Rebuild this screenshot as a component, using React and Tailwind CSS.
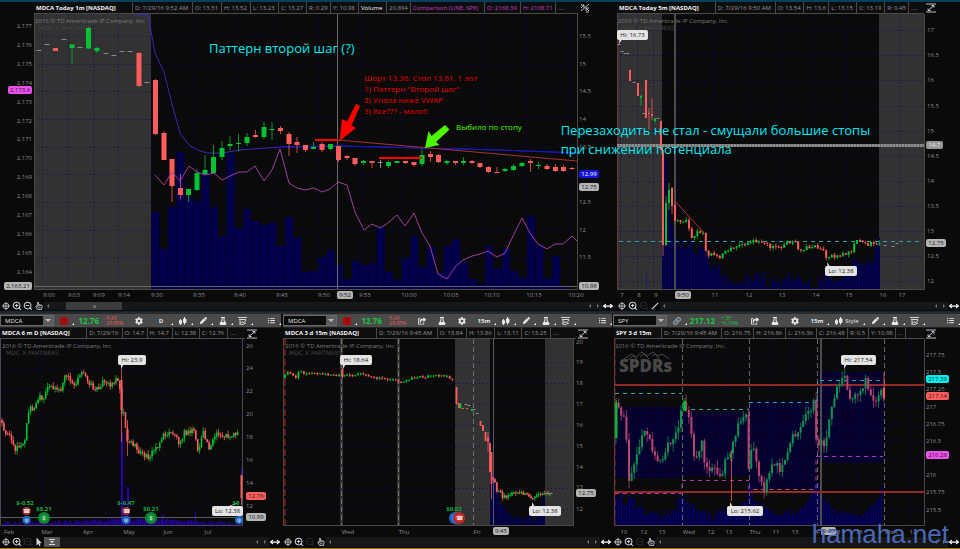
import { FaCog, FaFlask, FaPen, FaListUl, FaShareSquare, FaRegHandPointer, FaMousePointer, FaLink } from "react-icons/fa";
import { ZoomIn, ZoomOut, MoveHorizontal } from "lucide-react";

const GREEN = "#00c232";
const RED = "#ff5c5c";

// repeatable noise in the range -1..1
function noise(i) {
  const n = Math.sin(i * 12.9898 + 4.1) * 43758.5453;
  return (n - Math.floor(n)) * 2 - 1;
}

function levelAt(points, x) {
  for (let i = 1; i < points.length; i++) {
    const [x0, y0] = points[i - 1];
    const [x1, y1] = points[i];
    if (x <= x1) return y0 + ((y1 - y0) * (x - x0)) / (x1 - x0);
  }
  return points[points.length - 1][1];
}

// candles along a list of turning points: [x, top, bottom, high, low, up]
function walk(points, step, swing, wick = 1.4) {
  const out = [];
  let open = points[0][1];
  const end = points[points.length - 1][0];
  for (let x = points[0][0], i = 0; x <= end; x += step, i++) {
    const close = levelAt(points, x + step / 2) + noise(i) * swing;
    const top = Math.min(open, close);
    const bottom = Math.max(open, close, top + 1);
    out.push([
      x,
      top,
      bottom,
      top - Math.abs(noise(i + 500)) * swing * wick,
      bottom + Math.abs(noise(i + 900)) * swing * wick,
      close < open ? 1 : 0,
    ]);
    open = close;
  }
  return out;
}

const pts = (list) => list.map((p) => p.join(",")).join(" ");

function Candles({ data, width, up = GREEN, down = RED }) {
  return data.map(([x, top, bottom, high = top, low = bottom, isUp], i) => (
    <g key={i} fill={isUp ? up : down}>
      <rect x={x - 0.5} y={high} width="1" height={low - high} opacity="0.75" />
      <rect x={x - width / 2} y={top} width={width} height={bottom - top} />
    </g>
  ));
}

function Dashes({ data, width = 5 }) {
  return data.map(([x, y], i) => (
    <rect key={i} x={x - width / 2} y={y} width={width} height="1" fill="#8a8a8a" />
  ));
}

function Volume({ points, step, base, jitter = 0, fill = "#020050" }) {
  const bars = [];
  const end = points[points.length - 1][0];
  for (let x = points[0][0], i = 0; x <= end; x += step, i++) {
    const y = Math.min(base - 1, levelAt(points, x) + noise(i + 40) * jitter);
    bars.push(<rect key={i} x={x} y={y} width={step - 0.4} height={base - y} fill={fill} />);
  }
  return bars;
}

function Grid({ xs, ys, box }) {
  const [x0, y0, x1, y1] = box;
  return (
    <g stroke="#0c0c50" strokeDasharray="1 3">
      {xs.map((x) => (
        <line key={x} x1={x + 0.5} x2={x + 0.5} y1={y0} y2={y1} />
      ))}
      {ys.map((y) => (
        <line key={y} x1={x0} x2={x1} y1={y + 0.5} y2={y + 0.5} />
      ))}
    </g>
  );
}

function Frame({ box }) {
  const [x0, y0, x1, y1] = box;
  return (
    <path
      d={`M${x0 + 0.5} ${y0}V${y1 + 0.5}H${x1 + 0.5}V${y0}`}
      fill="none"
      stroke="#4a4a4a"
    />
  );
}

function PriceLabels({ x, labels, anchor = "start" }) {
  return labels.map(([text, y]) => (
    <text key={text} x={x} y={y + 2} fill="#8c8c8c" textAnchor={anchor}>
      {text}
    </text>
  ));
}

function TimeLabels({ y, labels }) {
  return labels.map(([text, x], i) => (
    <text key={i} x={x} y={y + 2} fill="#8c8c8c" textAnchor="middle">
      {text}
    </text>
  ));
}

function Tag({ x, y, w, text, fill = "#b4b4b4", color = "#1c1c1c" }) {
  return (
    <g>
      <rect x={x} y={y - 4} width={w} height="8" rx="2" fill={fill} />
      <text x={x + w / 2} y={y + 2} fill={color} textAnchor="middle">
        {text}
      </text>
    </g>
  );
}

function Callout({ x, y, w, text, tip }) {
  return (
    <g>
      <polygon points={`${tip[0]},${tip[1]} ${x + 3},${y + 5} ${x + 8},${y + 5}`} fill="#e4e4e4" />
      <rect x={x} y={y} width={w} height="10" rx="2" fill="#e4e4e4" />
      <text x={x + w / 2} y={y + 7} fill="#222" textAnchor="middle">
        {text}
      </text>
    </g>
  );
}

function Copyright({ x, y, partner = true }) {
  return (
    <g>
      <text x={x} y={y} fill="#7c7c7c">
        2016 © TD Ameritrade IP Company, Inc.
      </text>
      {partner && (
        <text x={x + 4} y={y + 7} fill="#444" fontFamily="DejaVu Sans, sans-serif">
          MDC X PARTNERS
        </text>
      )}
    </g>
  );
}

function Marker({ x, y, r = 4, fill, sign }) {
  return (
    <g>
      <circle cx={x} cy={y} r={r} fill={fill} />
      <circle cx={x} cy={y} r={r - 1.2} fill="none" stroke="#0a0a0a" strokeWidth="0.5" opacity="0.6" />
      <text x={x} y={y + 2} fill="#e8e8e8" textAnchor="middle">
        {sign}
      </text>
    </g>
  );
}

function Chart({ viewBox, label, children }) {
  return (
    <svg viewBox={viewBox} role="img" aria-label={label} className="block w-full h-auto text-[6px] font-medium">
      {children}
    </svg>
  );
}

/* ---------- header, toolbar, footer ---------- */

function AxisIcon({ split }) {
  return (
    <svg viewBox="0 0 10 10" className="size-2.5 text-gray-300" fill="none" stroke="currentColor">
      {split ? (
        <path d="M1 2h3v3M1 5l3-3M1 8l8-7M9 5H6v3M6 5l3 3M6 9h3" strokeWidth="0.9" />
      ) : (
        <path d="M0 1h10M0 9h10M2 7.5l6-5M5.5 2.5H8v2M2 5.5v2h2.5" strokeWidth="0.9" />
      )}
    </svg>
  );
}

function Header({ title, titleWidth, cells, split, className }) {
  return (
    <div className={"flex items-stretch pr-6 " + className}>
      <div className="flex flex-1 min-w-0 border-b border-[#4a4a4a] bg-[#0e0e0e] font-medium text-[#949494]">
        <h2
          className="flex min-w-0 items-center font-bold text-gray-100 whitespace-nowrap"
          style={{ flexGrow: titleWidth, flexBasis: 0 }}
        >
          <span className="pl-0.5">{title}</span>
        </h2>
        {cells.map(([text, width, color], i) => (
          <div key={i} className="flex min-w-0" style={{ flexGrow: width, flexBasis: 0 }}>
            <span
              className={
                "flex flex-1 items-center border-l border-[#4a4a4a] pl-0.5 whitespace-nowrap " +
                (color || "")
              }
            >
              {text}
            </span>
          </div>
        ))}
      </div>
      <div className="flex w-3 items-center justify-end">
        <AxisIcon split={split} />
      </div>
    </div>
  );
}

function ToolButton({ label, className = "w-5", corner = true, children }) {
  return (
    <button
      type="button"
      aria-label={label}
      className={"relative flex h-full shrink-0 items-center justify-center text-gray-200 " + className}
    >
      {children}
      {corner && (
        <svg viewBox="0 0 2 2" className="absolute right-0 bottom-0.5 size-0.5">
          <path d="M2 0v2H0z" fill="#fff" />
        </svg>
      )}
    </button>
  );
}

function CandleIcon() {
  return (
    <svg viewBox="0 0 8 8" className="size-2" fill="none" stroke="currentColor">
      <path d="M0.5 3.5h2v3h-2zM1.5 2v6" />
      <path d="M4.5 2h2.5v3.5H4.5zM5.5 0v7.5" fill="currentColor" />
    </svg>
  );
}

function PatternIcon() {
  return (
    <svg viewBox="0 0 10 10" className="size-2.5" fill="none" stroke="currentColor">
      <path d="M0 1.5h9M1 3.5h7M2 4v5M2 8l2-2.5 1.5 1.5L8 4M3 9l5-2" strokeWidth="0.9" />
    </svg>
  );
}

function Toolbar({ symbol, price, change, percent, tone, linked, study, interval, style, className = "" }) {
  return (
    <div className={"flex h-3.5 items-stretch border-b border-[#222] bg-[#4a4a4a] " + className}>
      <div className="relative my-px w-[54px] shrink-0">
        <select
          aria-label="Symbol"
          defaultValue={symbol}
          className="block h-full w-full appearance-none border border-[#6a6a6a] bg-[#0c0c0c] pl-1 text-[6px] leading-none text-gray-200"
        >
          <option>{symbol}</option>
        </select>
        <span className="pointer-events-none absolute inset-y-px right-px flex w-2.5 items-center justify-center bg-[#5c5c5c]">
          <svg viewBox="0 0 6 3" className="w-1.5">
            <path d="M0 0h6L3 3z" fill="#bbb" />
          </svg>
        </span>
      </div>
      <ToolButton label="Link">
        {linked ? (
          <span className="flex size-2 items-center justify-center rounded-[1px] bg-[#a80c0c] text-[5px] text-[#400]">
            1
          </span>
        ) : (
          <FaLink className="size-2 text-gray-400" />
        )}
      </ToolButton>
      <div
        className={
          "flex items-center justify-end pr-1 text-[8px] font-bold text-[#14c83c] " +
          (linked ? "w-[29px]" : "w-8")
        }
      >
        {price}
      </div>
      <div className={"flex w-[26px] flex-col justify-center pl-0.5 text-[5px] leading-[5px] font-medium " + tone}>
        <span>{change}</span>
        <span>{percent}</span>
      </div>
      {study && (
        <>
          <ToolButton label="Share" corner={false}>
            <FaShareSquare className="size-2" />
          </ToolButton>
          <ToolButton label="Studies" corner={false}>
            <FaFlask className="size-2" />
          </ToolButton>
        </>
      )}
      <ToolButton label="Settings" corner={false}>
        <FaCog className="size-2" />
      </ToolButton>
      <ToolButton label="Time frame" className="w-6">
        <span className="text-[6px] font-bold">{interval}</span>
      </ToolButton>
      <ToolButton label="Chart style" className={style ? "w-9 gap-0.5" : "w-5"}>
        <CandleIcon />
        {style && <span className="text-[6px]">{style}</span>}
      </ToolButton>
      <ToolButton label="Drawings">
        <FaPen className="size-[7px]" />
      </ToolButton>
      <ToolButton label="Edit studies">
        <FaFlask className="size-2" />
      </ToolButton>
      <ToolButton label="Patterns">
        <PatternIcon />
      </ToolButton>
      <ToolButton label="Menu" className="ml-auto w-5">
        <FaListUl className="size-[7px]" />
      </ToolButton>
    </div>
  );
}

function CrossIcon() {
  return (
    <svg viewBox="0 0 10 10" className="size-2" fill="none" stroke="currentColor">
      <circle cx="5" cy="5" r="3.5" />
      <path d="M5 0v10M0 5h10" />
    </svg>
  );
}

function Footer({ pointer, zoomedOut, thumb, className = "" }) {
  const btn = "flex w-[11px] shrink-0 items-center justify-center text-gray-300";
  return (
    <div className={"flex items-stretch " + className}>
      <button type="button" aria-label="Crosshair" className={btn}>
        <CrossIcon />
      </button>
      <button type="button" aria-label="Zoom in" className={btn}>
        <ZoomIn className="size-2.5" strokeWidth={2.5} />
      </button>
      <button type="button" aria-label="Zoom out" className={btn + (zoomedOut ? "" : " opacity-15")}>
        <ZoomOut className="size-2.5" strokeWidth={2.5} />
      </button>
      <button type="button" aria-label="Pointer" className={btn}>
        {pointer === "hand" && <FaRegHandPointer className="size-2" />}
        {pointer === "arrow" && <FaMousePointer className="size-2" />}
        {pointer === "line" && (
          <svg viewBox="0 0 10 10" className="size-2" stroke="currentColor">
            <path d="M1 9L9 1" strokeWidth="1.5" />
          </svg>
        )}
      </button>
      <div className="my-px flex min-w-0 flex-1 items-center gap-1 bg-[#171717] text-[#777]">
        {thumb === "tab" ? (
          <span className="flex h-full w-4 items-center justify-center bg-[#555]">
            <svg viewBox="0 0 6 6" className="size-1.5">
              <path d="M0 0.5h6M0 5.5h6" stroke="#ddd" />
              <path d="M1 2h4L3 4.5z" fill="#ddd" />
            </svg>
          </span>
        ) : (
          <svg viewBox="0 0 4 4" className="ml-0.5 size-1">
            <path d="M3 0v4L1 2z" fill="currentColor" />
          </svg>
        )}
        {thumb === "bar" && (
          <span className="ml-3 flex h-full w-14 items-center justify-center bg-[#3c3c3c]">
            <span className="size-[3px] bg-[#666]" />
          </span>
        )}
        <svg viewBox="0 0 4 4" className="ml-auto size-1">
          <path d="M3 0v4L1 2z" fill="currentColor" />
        </svg>
        <svg viewBox="0 0 4 4" className="mr-0.5 size-1">
          <path d="M1 0v4l2-2z" fill="currentColor" />
        </svg>
      </div>
      <button type="button" aria-label="Fit width" className="flex w-3 shrink-0 items-center justify-center text-white">
        <MoveHorizontal className="size-2.5" strokeWidth={3} />
      </button>
    </div>
  );
}

/* ---------- MDCA today, 1 minute ---------- */

const minuteCandles = [
  [55.5, 48, 51], [72, 44.5, 48, 44, 64, 1], [88.5, 28, 48.5, 27, 49, 1], [97, 48, 51, 47, 53, 1],
  [139, 53, 86, 52, 87], [155.5, 80, 134, 79, 135], [164, 133, 160, 131, 160], [172, 159, 186, 159, 202],
  [180.5, 188, 195, 174, 199], [188.5, 189, 195, 189, 202, 1], [197, 173, 190, 169, 191, 1],
  [205, 170, 174, 155, 175, 1], [213.5, 157, 173, 145, 174, 1], [222, 148, 157, 141, 160, 1],
  [230, 144, 146, 136, 150, 1], [238.5, 143, 144, 134, 151, 1], [247, 137, 143, 133, 146, 1],
  [255.5, 135, 137, 130, 138], [264, 127, 137, 122, 139, 1], [272, 129, 130, 122, 140, 1],
  [280.5, 128, 131, 126, 134], [289, 134, 144, 132, 156], [297, 142, 145, 137, 153],
  [305.5, 145, 150, 145, 152], [313.5, 147, 149, 142, 149, 1], [322, 144, 150, 142, 152],
  [330.5, 144, 149, 144, 150, 1], [338.5, 146, 160, 146, 162], [347, 156, 158, 155, 160],
  [355, 158, 164, 158, 166], [363.5, 161, 163, 160, 165, 1], [372, 161, 163, 161, 168],
  [388.5, 162, 166, 161, 168, 1], [397, 161, 163, 161, 163, 1], [405.5, 161, 163, 161, 164],
  [414, 162, 165, 162, 167], [422, 155, 164, 149, 166, 1], [430.5, 154, 157, 151, 162],
  [438.5, 155, 162, 154, 163], [447, 161, 163, 160, 165, 1], [455.5, 161, 163, 161, 165],
  [463.5, 161, 163, 157, 165, 1], [472, 161, 163, 160, 164], [480, 163, 167, 163, 168],
  [488.5, 167, 172, 166, 173], [497, 172, 173, 167, 173], [505, 169, 171, 168, 172, 1],
  [513.5, 166, 170, 164, 171, 1], [522, 163, 166, 162, 167, 1], [530.5, 161, 163, 159, 172],
  [538.5, 165, 166, 162, 169, 1], [547, 166, 169, 164, 170], [555.5, 167, 171, 164, 172],
  [563.5, 167, 171, 165, 172], [572, 168, 169, 167, 170],
];

const minuteVolume = [
  212, 249, 207, 152, 197, 201, 170, 207, 236, 153, 228, 209, 221, 225, 223, 246, 217, 237, 272, 271,
  257, 250, 265, 279, 261, 265, 263, 227, 272, 280, 258, 236, 267, 247, 273, 246, 239, 262, 279, 284,
  246, 269, 248, 271, 278, 216, 245, 278, 256, 287,
];

const spxLine = [
  [155, 175], [164, 185], [172, 172], [180, 181], [189, 166], [197, 172], [205, 175], [214, 173],
  [222, 180], [230, 176], [239, 172], [247, 172], [255, 166], [264, 181], [272, 170], [280, 149],
  [289, 183], [297, 188], [305, 190], [314, 188], [322, 192], [330, 189], [338, 182], [347, 185],
  [355, 212], [364, 230], [372, 224], [380, 228], [388, 223], [397, 215], [405, 226], [414, 213],
  [422, 233], [430, 246], [438, 274], [447, 279], [455, 267], [463, 260], [472, 256], [480, 254],
  [488, 251], [497, 257], [505, 253], [513, 236], [522, 218], [530, 233], [538, 244], [547, 249],
  [555, 244], [563, 244], [572, 236], [577, 241],
];

const vwapLine = [
  [133, 14], [148, 15], [155, 53], [164, 72], [172, 104], [180, 133], [189, 145], [197, 150],
  [207, 153], [222, 153], [240, 150], [280, 147], [340, 146], [420, 148], [500, 150], [577, 153],
];

const spxLabels = Array.from({ length: 14 }, (_, i) => ["2," + (177 - i), Math.round(26 + i * 18.9)]);

function MinuteChart() {
  const box = [34, 14, 577, 289];
  return (
    <Chart viewBox="0 14 614 287" label="MDCA 1 minute">
      <rect x="34" y="14" width="117" height="275" fill="#323232" />
      <Grid
        xs={[42, 68, 93, 118, 151, 193, 235, 276, 318, 360, 401, 443, 485, 526, 568]}
        ys={[36, 64, 91, 119, 147, 174, 202, 230, 257]}
        box={box}
      />
      <Copyright x={35} y={23} />
      {minuteVolume.map((y, i) => (
        <rect key={i} x={151.4 + i * 8.35} y={y} width="8" height={289 - y} fill="#02004a" />
      ))}
      <Frame box={box} />
      <rect x="34" y="286" width="543" height="1" fill="#666" />
      <rect x="337" y="14" width="1" height="275" fill="#6c6c6c" />
      <Dashes data={[[39, 50], [47, 44], [64, 39], [80, 47], [106, 53], [114, 55], [122, 51], [130, 51], [147, 82], [380, 162]]} />
      <rect x="380" y="160" width="1" height="8" fill="#8a8a8a" />
      <polyline points={pts(vwapLine)} fill="none" stroke="#3a28b4" />
      <polyline points="280,147 340,146 420,148 500,150 577,153" fill="none" stroke="#1414c0" />
      <Candles data={minuteCandles} width={5} />
      <polyline points={pts(spxLine)} fill="none" stroke="#a03ca0" />
      <line x1="338" y1="140" x2="577" y2="161" stroke="#a83232" />
      <rect x="315" y="139" width="23" height="2" fill="#f00" />
      <rect x="379" y="157" width="43" height="2" fill="#f00" />
      <polygon points="356,104 360,106 351.5,125.5 356,128 339.5,141 342,119 347,121.5" fill="#f00" />
      <polygon points="445,125 449.5,129.5 436,142 439.5,145 425,148 428.5,131 431.5,136" fill="#4cf800" />
      <PriceLabels x={32} labels={spxLabels} anchor="end" />
      <Tag x={8} y={90} w={24} text="2,173.6" fill="#f050f0" />
      <Tag x={4} y={286} w={28} text="2,163.21" />
      <PriceLabels
        x={579}
        labels={[["15.5", 36], ["15", 64], ["14.5", 91], ["14", 119], ["13.5", 147], ["12.5", 202], ["12", 230], ["11.5", 257]]}
      />
      <Tag x={579} y={174} w={20} text="12.99" fill="#1414dc" color="#fff" />
      <Tag x={579} y={187} w={20} text="12.75" />
      <Tag x={579} y={286} w={20} text="10.98" />
      <TimeLabels
        y={295}
        labels={[
          ["9:00", 49], ["9:03", 74], ["9:09", 99], ["9:14", 124], ["9:30", 157], ["9:35", 199],
          ["9:40", 240], ["9:45", 282], ["9:50", 324], ["9:55", 365], ["10:00", 409], ["10:05", 451],
          ["10:10", 492], ["10:15", 534], ["10:20", 576],
        ]}
      />
      <Tag x={337} y={295} w={16} text="9:52" />
      <g fontWeight="400">
        <text x="209" y="53" fill="#00e8f0" className="text-[13px]">
          Паттерн второй шаг (?)
        </text>
        <g fill="#e60000" className="text-[8px]">
          <text x="364" y="81">Шорт 13.36. Стоп 13.61. 1 лот</text>
          <text x="364" y="92">1) Паттерн "Второй шаг"</text>
          <text x="364" y="103">2) Упала ниже VWAP</text>
          <text x="364" y="114">3) Все??? - мало!!</text>
        </g>
        <text x="456" y="130" fill="#4cf800" className="text-[8px]">
          Выбило по стопу
        </text>
      </g>
    </Chart>
  );
}

/* ---------- MDCA today, 5 minutes ---------- */

const fiveMinute = walk(
  [
    [675, 205], [676, 221], [684, 221], [688, 219], [693, 240], [698, 230], [705, 234], [708, 258],
    [712, 253], [720, 258], [728, 251], [737, 248], [747, 243], [755, 241], [763, 242], [772, 247],
    [782, 247], [788, 241], [797, 243], [799, 250], [810, 247], [823, 247], [828, 260], [833, 256],
    [843, 255], [853, 250], [856, 243], [859, 238], [868, 245], [877, 243], [881, 244],
  ],
  2.8,
  2
);

const fiveMinuteOpen = [
  [630, 70, 81], [638, 83, 96], [641, 96, 98, 95, 106, 1], [646, 80, 118], [649, 113, 114, 108, 130],
  [652, 114, 116, 98, 120], [655, 118, 121, 118, 123, 1], [661, 121, 150], [663, 150, 245, 150, 256],
  [666, 203, 245, 196, 246, 1], [669, 190, 203, 183, 210, 1], [672, 188, 206, 187, 214],
];

function FiveMinuteChart() {
  const box = [617, 14, 924, 289];
  return (
    <Chart viewBox="614 14 346 287" label="MDCA 5 minutes">
      <rect x="617" y="14" width="45" height="275" fill="#323232" />
      <rect x="879" y="14" width="45" height="275" fill="#323232" />
      <Grid
        xs={[620, 637, 653, 679, 713, 746, 779, 812, 846, 899]}
        ys={[30, 55, 80, 106, 131, 156, 181, 206, 231, 256, 281]}
        box={box}
      />
      <Copyright x={618} y={23} />
      <rect x="646" y="273" width="1" height="16" fill="#1a1a70" />
      <Volume
        points={[
          [662, 152], [665, 152], [668, 215], [671, 232], [680, 244], [690, 246], [700, 250], [708, 262],
          [720, 270], [730, 280], [740, 284], [750, 278], [760, 276], [770, 283], [785, 277], [800, 280],
          [815, 285], [825, 277], [835, 282], [848, 272], [855, 254], [862, 268], [873, 262], [877, 222],
          [880, 280],
        ]}
        step={2.8}
        base={289}
        jitter={7}
      />
      <Frame box={box} />
      <rect x="674" y="14" width="2" height="275" fill="#4c4c4c" />
      <line x1="618" x2="618" y1="30" y2="289" stroke="#8c1c1c" strokeDasharray="6 2" />
      <line x1="619" x2="919" y1="241.5" y2="241.5" stroke="#1cacac" strokeDasharray="4 4" />
      <Dashes data={[[619, 44], [622, 51], [625, 53], [628, 53], [634, 82], [644, 113], [658, 118], [885, 245], [893, 246], [897, 243]]} width={3} />
      <rect x="617" y="144" width="307" height="3" fill="#6c6c6c" />
      <line x1="617" x2="924" y1="145.5" y2="145.5" stroke="#8c8c8c" strokeWidth="3" strokeDasharray="2 1" />
      <Candles data={fiveMinuteOpen} width={2} />
      <Candles data={fiveMinute} width={2} />
      <line x1="674" y1="200" x2="704" y2="233" stroke="#b43232" />
      <Callout x={617} y={30} w={31} text="Hi: 16.73" tip={[619, 44]} />
      <Callout x={825} y={266} w={32} text="Lo: 12.38" tip={[827, 262]} />
      <PriceLabels
        x={927}
        labels={[
          ["17", 30], ["16.5", 55], ["16", 80], ["15.5", 106], ["15", 131], ["14.5", 156], ["14", 181],
          ["13.5", 206], ["13", 231], ["12.5", 256], ["12", 281],
        ]}
      />
      <Tag x={926} y={145} w={17} text="14.7" fill="#969696" color="#f0f0f0" />
      <Tag x={926} y={243} w={20} text="12.75" />
      <TimeLabels
        y={295}
        labels={[
          ["7", 622], ["8", 639], ["9", 656], ["11", 715], ["12", 749], ["13", 782], ["14", 816],
          ["15", 849], ["16", 883], ["17", 902],
        ]}
      />
      <Tag x={675} y={295} w={16} text="9:50" />
    </Chart>
  );
}

/* ---------- MDCA, 6 months ---------- */

const sixMonths = walk(
  [
    [2, 420], [5, 432], [10, 432], [15, 450], [18, 445], [23, 447], [27, 437], [28, 417], [32, 407],
    [35, 410], [40, 397], [44, 402], [50, 383], [55, 389], [62, 390], [67, 373], [72, 383], [77, 383],
    [80, 372], [87, 377], [92, 385], [97, 391], [103, 382], [108, 385], [115, 382], [120, 377],
    [122, 410], [125, 413], [128, 440], [133, 443], [140, 452], [148, 457], [153, 453], [160, 443],
    [165, 435], [175, 433], [180, 442], [185, 433], [192, 433], [194, 425], [199, 452], [204, 433],
    [210, 447], [217, 435], [230, 436], [239, 433],
  ],
  1.9,
  3
);

function SixMonthChart() {
  const box = [0, 339, 242, 525];
  return (
    <Chart viewBox="0 339 281 197" label="MDCA 6 months daily">
      <Grid xs={[3, 41, 83, 124, 163, 205]} ys={[346, 368, 391, 414, 437, 460, 483, 506]} box={box} />
      <Copyright x={2} y={348} />
      <Volume points={[[1, 523], [60, 522], [120, 519], [160, 520], [200, 522], [240, 523]]} step={1.9} base={525} jitter={2} fill="#2400a0" />
      <g fill="#2800b4">
        <rect x="121" y="432" width="2" height="93" />
        <rect x="127" y="487" width="2" height="38" />
        <rect x="162" y="514" width="1" height="11" />
        <rect x="195" y="511" width="1" height="14" />
        <rect x="241" y="468" width="1" height="57" />
      </g>
      <Frame box={box} />
      <rect x="0" y="517" width="242" height="1" fill="#5c5c5c" />
      <Candles data={sixMonths} width={1.6} />
      <Candles data={[[121.5, 380, 410, 369, 442], [127.5, 430, 440, 420, 456], [241.5, 475, 498, 475, 505]]} width={2} />
      <g fill="#14b43c" textAnchor="middle" fontWeight="bold">
        <text x="25" y="505">$-0.52</text>
        <text x="44" y="511">$0.21</text>
        <text x="126" y="505">$-0.47</text>
        <text x="151" y="511">$0.21</text>
        <text x="236" y="505">$0</text>
      </g>
      <Marker x={26.5} y={511} fill="#c83232" sign="☎" />
      <Marker x={26.5} y={520} fill="#1e78dc" sign="ψ" />
      <Marker x={44} y={518} r={6} fill="#14963c" sign="$" />
      <Marker x={126} y={511} fill="#c83232" sign="☎" />
      <Marker x={126} y={520} fill="#1e78dc" sign="ψ" />
      <Marker x={151} y={518} r={6} fill="#14963c" sign="$" />
      <Marker x={239} y={520} fill="#1e78dc" sign="ψ" />
      <Callout x={118} y={355} w={28} text="Hi: 23.9" tip={[121, 369]} />
      <Callout x={212} y={506} w={31} text="Lo: 12.38" tip={[240, 502]} />
      <PriceLabels
        x={246}
        labels={[["26", 346], ["24", 368], ["22", 391], ["20", 414], ["18", 437], ["16", 460], ["14", 483], ["12", 506]]}
      />
      <Tag x={246} y={496} w={20} text="12.76" fill={RED} />
      <Tag x={246} y={517} w={20} text="10.99" />
      <TimeLabels y={532} labels={[["Feb", 9], ["Mar", 47], ["Apr", 88], ["May", 129], ["Jun", 168], ["Jul", 208]]} />
    </Chart>
  );
}

/* ---------- MDCA, 3 days ---------- */

const threeDays = [
  ...walk(
    [
      [285, 378], [288, 372], [293, 373], [297, 378], [300, 372], [308, 373], [325, 374], [338, 376],
      [357, 375], [358, 373], [367, 375], [375, 378], [397, 379], [400, 383], [404, 383], [408, 379],
      [422, 377], [435, 376], [442, 375], [450, 377], [454, 379],
    ],
    2.7,
    1.2
  ),
  [342.5, 369, 377, 368, 378], [456.5, 387, 404, 387, 405], [459, 403, 408], [460.5, 404, 408, 403, 409, 1],
  [463, 408, 409], [467, 408, 409], [472, 409, 411, 409, 411, 1], [480.5, 421, 426],
  [483, 425, 431], [485.5, 432, 441], [488, 437, 442, 432, 452], [490, 443, 472], [491.5, 452, 484, 452, 499],
  ...walk(
    [
      [493, 478], [497, 485], [498, 492], [501, 488], [503, 499], [508, 495], [515, 493], [523, 493],
      [530, 496], [532, 500], [537, 497], [541, 493], [550, 494],
    ],
    1.9,
    2
  ),
];

function ThreeDayChart() {
  const box = [283, 339, 573, 525];
  return (
    <Chart viewBox="281 339 331 197" label="MDCA 3 days">
      <rect x="455" y="339" width="35" height="186" fill="#323232" />
      <rect x="545" y="339" width="28" height="186" fill="#323232" />
      <Grid xs={[]} ys={[362, 383, 404, 425, 446, 467, 488, 509]} box={box} />
      <Copyright x={285} y={348} />
      <Volume
        points={[[490, 432], [492, 470], [495, 480], [499, 500], [508, 515], [520, 519], [528, 516], [535, 519], [540, 508], [544, 494]]}
        step={1.9}
        base={525}
        jitter={3}
      />
      <Frame box={box} />
      <g fill="#323232">
        <rect x="340" y="339" width="3" height="186" />
        <rect x="397" y="339" width="3" height="186" />
      </g>
      <g stroke="#707070" strokeDasharray="5 3">
        <line x1="341.5" x2="341.5" y1="339" y2="525" />
        <line x1="398.5" x2="398.5" y1="339" y2="525" />
        <line x1="473.5" x2="473.5" y1="339" y2="525" />
      </g>
      <rect x="493" y="339" width="1" height="186" fill="#5c5c5c" />
      <line x1="285" x2="285" y1="339" y2="525" stroke="#641414" strokeWidth="2" strokeDasharray="7 3" />
      <Candles data={threeDays} width={1.8} />
      <Dashes data={[[466, 404], [469, 405], [474, 409], [477, 413], [551, 493]]} width={3} />
      <text x="454" y="511" fill="#14b43c" textAnchor="middle" fontWeight="bold">
        $0.02
      </text>
      <Marker x={455} y={518} r={6} fill="#1e78dc" sign="" />
      <Marker x={459} y={518} r={6} fill="#d23232" sign="☎" />
      <Callout x={340} y={355} w={32} text="Hi: 18.64" tip={[343, 369]} />
      <Callout x={529} y={506} w={32} text="Lo: 12.38" tip={[532, 502]} />
      <PriceLabels
        x={576}
        labels={[
          ["20", 342], ["19", 362], ["18", 383], ["17", 404], ["16", 425], ["15", 446], ["14", 467],
          ["13", 487], ["12", 509],
        ]}
      />
      <Tag x={576} y={493} w={20} text="12.75" />
      <TimeLabels y={532} labels={[["Wed", 348], ["Thu", 404], ["Fri", 477]]} />
      <Tag x={493} y={531} w={16} text="9:45" />
    </Chart>
  );
}

/* ---------- SPY, 3 days ---------- */

const spy = walk(
  [
    [616, 438], [617, 403], [622, 413], [627, 415], [629, 482], [632, 482], [635, 462], [640, 447],
    [645, 432], [650, 435], [655, 458], [658, 457], [663, 465], [668, 447], [673, 445], [678, 433],
    [681, 425], [683, 397], [688, 410], [692, 427], [695, 457], [700, 455], [703, 443], [707, 468],
    [712, 473], [715, 462], [720, 475], [723, 473], [727, 460], [731, 460], [733, 443], [738, 430],
    [743, 417], [748, 418], [750, 468], [753, 442], [757, 460], [760, 477], [765, 490], [770, 473],
    [777, 460], [782, 470], [788, 453], [795, 433], [800, 437], [803, 420], [810, 413], [815, 403],
    [818, 442], [822, 443], [827, 447], [830, 417], [837, 393], [840, 385], [845, 373], [850, 397],
    [855, 398], [860, 390], [868, 380], [872, 398], [877, 403], [882, 388], [884, 398],
  ],
  2.6,
  4,
  2
);

function SpyChart() {
  const box = [614, 339, 924, 525];
  return (
    <Chart viewBox="612 339 348 197" label="SPY 3 days">
      <g fill="#06002e">
        <rect x="615" y="407" width="67" height="71" />
        <rect x="682" y="412" width="67" height="64" />
        <rect x="749" y="401" width="68" height="87" />
        <rect x="818" y="372" width="66" height="91" />
      </g>
      <Grid
        xs={[620, 641, 659, 707, 726, 773, 792, 838, 856, 911]}
        ys={[355, 372, 389, 407, 424, 441, 458, 475, 510]}
        box={box}
      />
      <Copyright x={615} y={348} partner={false} />
      <path
        d="M624 359l8-5 4 3 6-5 5 4 6-4 5 4 4-2 7 5M628 360l5-4 4 3M640 357l4-3 5 5M652 356l3-2 4 5"
        fill="none"
        stroke="#484848"
      />
      <text x="619" y="372" fill="#484848" fontWeight="800" className="text-[17px]">
        SPDRs
      </text>
      <Volume
        points={[
          [615, 495], [621, 496], [624, 512], [629, 490], [635, 505], [645, 512], [655, 516], [665, 514],
          [675, 508], [680, 490], [686, 503], [700, 512], [712, 517], [722, 508], [735, 513], [745, 500],
          [748, 480], [752, 495], [760, 505], [775, 515], [790, 513], [805, 507], [815, 480], [820, 492],
          [830, 508], [845, 516], [860, 515], [875, 505], [882, 485],
        ]}
        step={2.6}
        base={525}
        jitter={4}
        fill="#04005a"
      />
      <Frame box={box} />
      <g stroke="#646464" strokeDasharray="5 3">
        <line x1="682.5" x2="682.5" y1="339" y2="525" />
        <line x1="749.5" x2="749.5" y1="339" y2="525" />
        <line x1="817.5" x2="817.5" y1="339" y2="525" />
        <line x1="884.5" x2="884.5" y1="339" y2="525" />
      </g>
      <rect x="820" y="339" width="2" height="186" fill="#4c4c4c" />
      <line x1="615" x2="615" y1="339" y2="525" stroke="#8c1c1c" strokeDasharray="7 3" />
      <g fill="none" strokeDasharray="4 4">
        <path d="M615 393.5h67M683 409.5h66M749 402.5h67M817.5 402V380.5h66" stroke="#14acac" />
        <path d="M615 493.5h67V480.5h67V489.5h67V456.5h67" stroke="#b432b4" />
      </g>
      <g fill="#962828">
        <rect x="614" y="384" width="311" height="2" />
        <rect x="614" y="491" width="311" height="2" />
      </g>
      <Candles data={spy} width={2} up="#0c9450" down="#b84470" />
      <Candles data={[[616.5, 403, 438, 400, 438, 1], [685, 401, 411, 398, 411, 1], [731.5, 460, 461, 450, 501], [884, 388, 397, 373, 399]]} width={2} />
      <Callout x={841} y={355} w={35} text="Hi: 217.54" tip={[844, 369]} />
      <Callout x={727} y={506} w={36} text="Lo: 215.62" tip={[730, 502]} />
      <PriceLabels
        x={926}
        labels={[
          ["217.75", 355], ["217.5", 372], ["217.25", 389], ["217", 407], ["216.75", 424], ["216.5", 441],
          ["216", 475], ["215.75", 492], ["215.5", 510],
        ]}
      />
      <Tag x={926} y={379} w={23} text="217.39" fill="#00f0f0" />
      <Tag x={926} y={396} w={23} text="217.14" fill={RED} />
      <Tag x={926} y={455} w={23} text="216.28" fill="#f050f0" />
      <TimeLabels
        y={532}
        labels={[
          ["10", 624], ["12", 644], ["13", 662], ["Wed", 689], ["12", 711], ["13", 729], ["Thu", 755],
          ["11", 776], ["13", 795], ["F", 818], ["11", 841], ["13", 859], ["Mon", 891], ["12", 913],
        ]}
      />
      <Tag x={821} y={531} w={15} text="9:45" />
    </Chart>
  );
}

export default function App() {
  return (
    <main className="relative min-h-screen overflow-hidden border-t-2 border-[#07405c] bg-[#0a0a0a] font-['Open_Sans','Noto_Sans',sans-serif] text-[6px] leading-none">
      <div className="relative grid grid-cols-[614fr_346fr]">
        <section className="border-b border-[#0c2c3c]">
          <Header
            className="h-3 pl-[34px]"
            title="MDCA Today 1m [NASDAQ]"
            titleWidth={98}
            split
            cells={[
              ["D: 7/29/16 9:52 AM", 60], ["O: 13.51", 29], ["H: 13.52", 29], ["L: 13.23", 28],
              ["C: 13.27", 28], ["R: 0.29", 24], ["Y: 10.98", 28], ["Volume", 28, "text-gray-100"],
              ["20,894", 24], ["Comparison (LINE, SPX)", 74, "text-[#c83cc8]"],
              ["O: 2168.39", 36, "text-[#c83cc8]"], ["H: 2168.71", 35, "text-[#c83cc8]"], ["....", 23],
            ]}
          />
          <MinuteChart />
          <Footer pointer="hand" zoomedOut thumb="bar" className="h-[10px]" />
        </section>
        <section className="border-b border-[#0c2c3c]">
          <Header
            className="h-3 pl-[3px]"
            title="MDCA Today 5m [NASDAQ]"
            titleWidth={98}
            cells={[
              ["D: 7/29/16 9:50 AM", 60], ["O: 13.54", 29], ["H: 13.6", 25], ["L: 13.15", 28],
              ["C: 13.19", 28], ["R: 0.45", 24], ["....", 16],
            ]}
          />
          <FiveMinuteChart />
          <Footer pointer="line" className="h-[10px] pl-0.5" />
        </section>
        <p className="absolute top-[119px] left-[58.4%] text-[13px] leading-[19px] whitespace-pre text-[#00e8f0]">
          Перезаходить не стал - смущали большие стопы
          <br />
          при снижении потенциала
        </p>
      </div>

      <div className="grid grid-cols-[281fr_331fr_348fr] border-t-2 border-b border-t-[#2c2828] border-b-[#a8780c]">
        <section>
          <Toolbar
            symbol="MDCA"
            price="12.76"
            change="-5.43"
            percent="-29.85%"
            tone="text-[#f05858]"
            linked
            interval="D"
          />
          <Header
            className="h-[11px]"
            title="MDCA 6 m D [NASDAQ]"
            titleWidth={86}
            cells={[["D: 7/29/16", 35], ["O: 14.7", 25], ["H: 14.7", 25], ["L: 12.38", 27], ["C: 12.76", 28], ["....", 18]]}
          />
          <SixMonthChart />
          <Footer pointer="arrow" thumb="tab" className="h-3" />
        </section>
        <section>
          <Toolbar
            className="ml-0.5"
            symbol="MDCA"
            price="12.76"
            change="-5.43"
            percent="-29.85%"
            tone="text-[#f05858]"
            linked
            study
            interval="15m"
          />
          <Header
            className="h-[11px] pl-0.5"
            title="MDCA 3 d 15m [NASDAQ]"
            titleWidth={92}
            cells={[["D: 7/29/16 9:45 AM", 60], ["O: 13.84", 29], ["H: 13.86", 28], ["L: 13.11", 27], ["C: 13.25", 28], ["....", 26]]}
          />
          <ThreeDayChart />
          <Footer pointer="hand" className="h-3 pl-px" />
        </section>
        <section>
          <Toolbar
            className="ml-px"
            symbol="SPY"
            price="217.12"
            change="+.35"
            percent="+0.16%"
            tone="text-[#14c83c]"
            study
            interval="15m"
            style="Style"
          />
          <Header
            className="h-[11px] pl-0.5"
            title="SPY 3 d 15m"
            titleWidth={47}
            cells={[
              ["D: 7/29/16 9:45 AM", 60], ["O: 216.75", 32], ["H: 216.86", 32], ["L: 216.36", 31],
              ["C: 216.48", 31], ["R: 0.5", 21], ["Y: 10.98", 27], ["...", 10], ["", 19],
            ]}
          />
          <SpyChart />
          <Footer pointer="hand" className="h-3" />
        </section>
      </div>
      <a
        href="#hamaha"
        className="absolute right-[11px] bottom-[3px] font-['Liberation_Sans',Arial,sans-serif] text-[26px] leading-6 text-[#4a68b8]"
      >
        hamaha.net
      </a>
    </main>
  );
}
